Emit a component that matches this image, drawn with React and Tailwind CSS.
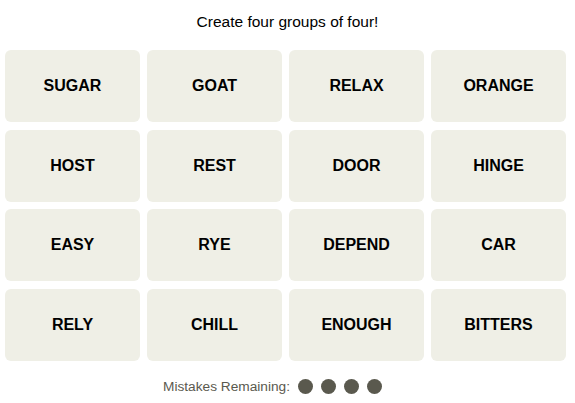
const WORDS = [
  "SUGAR", "GOAT", "RELAX", "ORANGE",
  "HOST", "REST", "DOOR", "HINGE",
  "EASY", "RYE", "DEPEND", "CAR",
  "RELY", "CHILL", "ENOUGH", "BITTERS",
];

const App = () => {
  return (
    <div className="w-[575px] h-[403px] bg-white font-['Liberation_Sans',Arial,sans-serif] select-none">
      <p className="pt-[10px] h-[50px] text-center text-[15.5px] text-black">
        Create four groups of four!
      </p>

      {/* Word grid */}
      <div className="ml-[5px] w-[561px] grid grid-cols-4 gap-x-[7px] gap-y-[7.5px]">
        {WORDS.map((word) => (
          <button
            key={word}
            className="h-[72px] rounded-md bg-[#efefe6] flex items-center justify-center text-[16px] font-bold text-black"
          >
            {word}
          </button>
        ))}
      </div>

      <div className="mt-[16px] pl-[163px] flex items-center">
        <span className="text-[13.7px] text-[#5a594e]">Mistakes Remaining:</span>
        <div className="flex items-center gap-[8px] ml-[8px]">
          {[0, 1, 2, 3].map((i) => (
            <span key={i} className="size-[15px] rounded-full bg-[#5a594e]" />
          ))}
        </div>
      </div>
    </div>
  );
};

export default App;
